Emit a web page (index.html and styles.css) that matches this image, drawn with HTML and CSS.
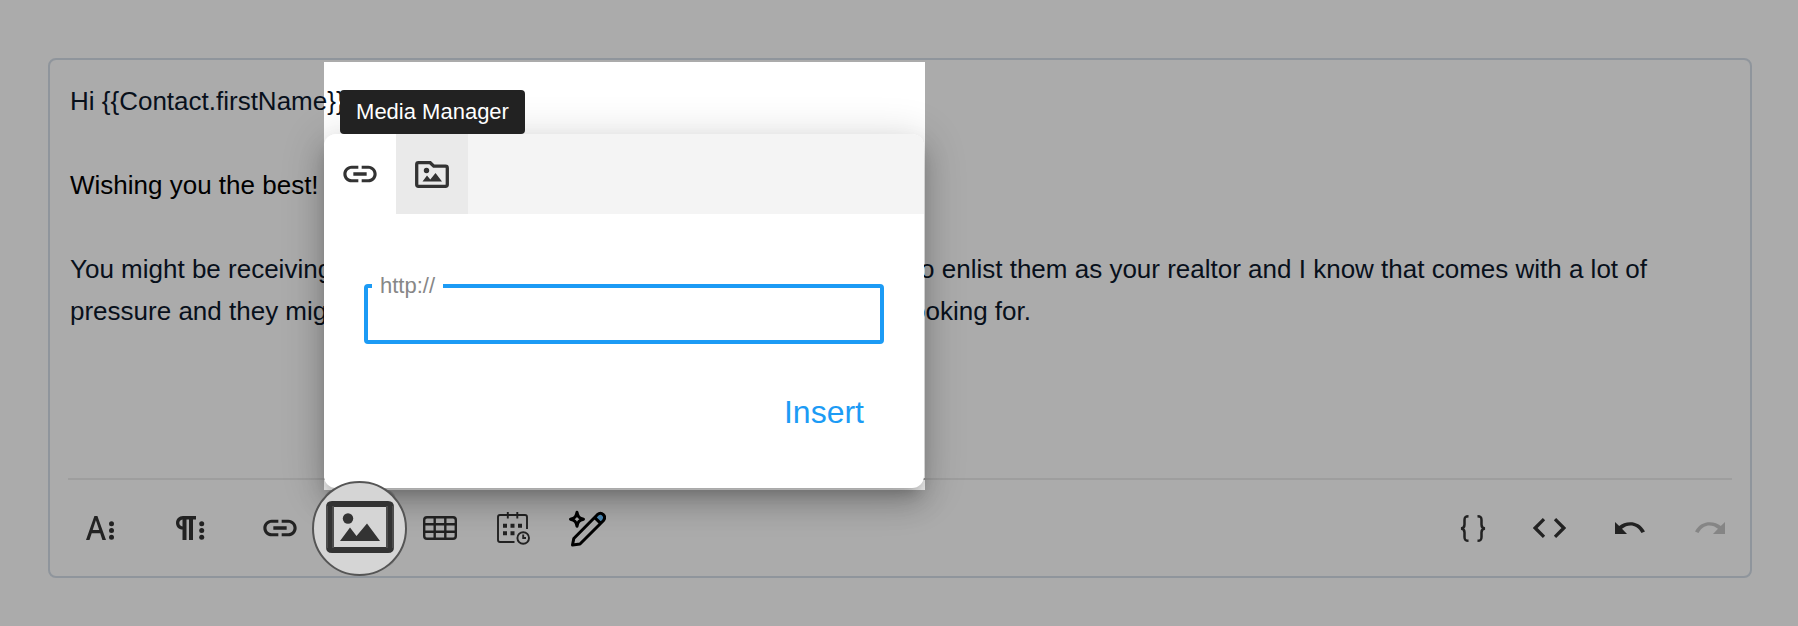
FILE: index.html
```html
<!DOCTYPE html>
<html lang="en">
<head>
<meta charset="utf-8">
<title>Message editor</title>
<link rel="stylesheet" href="styles.css">
</head>
<body>
<div class="spotlight"></div>
<main class="editor">
  <div class="content">
    <p class="line">Hi {{Contact.firstName}},</p>
    <p class="line plain">Wishing you the best!</p>
    <p class="line split wide"><span>You might be receiving</span><span>to enlist them as your realtor and I know that comes with a lot of</span></p>
    <p class="line split short"><span>pressure and they might</span><span>looking for.</span></p>
  </div>
  <div class="toolbar">
    <svg class="i-font" width="28" height="24" viewBox="0 0 28 24"><path d="M0 24 8.400 0h3L20 24h-3.600l-2.200-6.700H5.700L3.500 24zM6.700 14h6.500L9.900 4.200z"/><circle cx="25.500" cy="7.700" r="2.500"/><circle cx="25.500" cy="14.500" r="2.500"/><circle cx="25.500" cy="21.300" r="2.500"/></svg>
    <svg class="i-para" width="29" height="24" viewBox="0 0 29 24"><path d="M7 0h13v3.400h-3V24h-4V3.400h-2.500V24h-4V13.500C2.800 13.500 0 10.800 0 7s3-7 7-7zM6.500 3.400C4.500 3.700 3.300 5 3.300 6.900s1.200 3.200 3.200 3.500z"/><circle cx="25.700" cy="7.700" r="2.500"/><circle cx="25.700" cy="14.500" r="2.500"/><circle cx="25.700" cy="21.300" r="2.500"/></svg>
    <svg class="i-link" width="40" height="40" viewBox="0 0 24 24"><path d="M3.900 12c0-1.710 1.390-3.100 3.100-3.100h4V7H7c-2.760 0-5 2.240-5 5s2.240 5 5 5h4v-1.900H7c-1.710 0-3.100-1.390-3.100-3.100zM8 13h8v-2H8v2zm9-6h-4v1.900h4c1.710 0 3.100 1.390 3.100 3.100s-1.390 3.100-3.100 3.100h-4V17h4c2.760 0 5-2.240 5-5s-2.240-5-5-5z"/></svg>
    <div class="loupe">
      <svg width="68" height="54" viewBox="0 0 68 54"><path fill-rule="evenodd" d="M6 1h56q6 0 6 6v40q0 6-6 6H6q-6 0-6-6V7q0-6 6-6zM8 7v40h52V7z"/><path class="soft" d="M0 6h2v42H0zM6 6h2v42H6zM60 6h2v42h-2zM66 6h2v42h-2z"/><circle cx="22" cy="18.500" r="5.200"/><path d="M14 41 24 27.500l6.500 8.500L41 23.500 54 41z"/></svg>
    </div>
    <svg class="i-table" width="34" height="24" viewBox="0 0 34 24"><path class="stroke" d="M4 1.200h26q2.800 0 2.800 2.800v16q0 2.800-2.800 2.800H4q-2.800 0-2.800-2.800V4q0-2.800 2.800-2.800zM1 8.200h32M1 15.800h32M11.700 1v22M22.300 1v22"/></svg>
    <svg class="i-cal" width="33" height="33" viewBox="0 0 33 33"><path class="thin" d="M17.500 30H3q-2 0-2-2V5q0-2 2-2h25q2 0 2 2v12M10.800 0v6.500M20.300 0v6.500"/><path d="M6 11.700h4v4H6zM13.500 11.700h4v4h-4zM21 11.700h4v4h-4zM6 19.200h4v4H6zM13.500 19.200h4v4h-4z"/><circle class="thin" cx="26.200" cy="26" r="5.800"/><path class="thin" d="M26.200 22.500V26H29"/></svg>
    <svg class="i-pen" width="38" height="37" viewBox="0 0 38 37"><path class="line-art" d="M9 2.200c.8 4.500 2 5.800 6.500 7-4.500 1-5.700 2.500-6.500 7-.8-4.500-2-6-6.500-7 4.500-1.200 5.700-2.500 6.500-7z"/><path class="tip" d="m27 8.200 2.300-2.400c4-4.200 9.700 1.200 6 5.500L32.700 14z"/><path class="line-art" d="m4.500 35 1.300-6.500L29.300 4.700c4.300-3.800 9.700 1.600 6 6L12 34zM26.800 7.600l6.100 6"/></svg>
    <svg class="i-brace" width="26" height="27" viewBox="0 0 26 27"><path class="brace" d="M8.500 1.300C5 1.300 4.500 2.500 4.500 5v4.500c0 2.500-.7 3.800-3.500 4 2.800.2 3.500 1.500 3.500 4V22c0 2.500.5 3.700 4 3.700M17.500 1.300c3.500 0 4 1.200 4 3.700v4.500c0 2.500.7 3.800 3.500 4-2.800.2-3.500 1.500-3.500 4V22c0 2.500-.5 3.700-4 3.700"/></svg>
    <svg class="i-code" width="33" height="20" viewBox="0 0 33 20"><path class="code" d="M11 1.200 2.200 10l8.800 8.800M22 1.200l8.800 8.800-8.800 8.800"/></svg>
    <svg class="i-undo" width="30" height="12" viewBox="0 0 30 12"><path d="M0 0 4.200 4C10-.8 23.500-2.800 30 9.500L26.500 11C21.500 1.800 13 1.900 7 6.800L12 12H0z"/></svg>
    <svg class="i-redo" width="30" height="12" viewBox="0 0 30 12"><path d="M30 0l-4.200 4C20-.8 6.500-2.800 0 9.500L3.500 11C8.500 1.800 17 1.900 23 6.800L18 12h12z"/></svg>
  </div>
</main>
<section class="popup">
  <div class="tabs">
    <div class="tab active"><svg width="40" height="40" viewBox="0 0 24 24"><path d="M3.900 12c0-1.710 1.390-3.100 3.100-3.100h4V7H7c-2.760 0-5 2.240-5 5s2.240 5 5 5h4v-1.900H7c-1.710 0-3.100-1.390-3.100-3.100zM8 13h8v-2H8v2zm9-6h-4v1.900h4c1.710 0 3.100 1.390 3.100 3.100s-1.390 3.100-3.100 3.100h-4V17h4c2.760 0 5-2.240 5-5s-2.240-5-5-5z"/></svg></div>
    <div class="tab hover"><svg width="34" height="27" viewBox="0 0 34 27"><path class="folder" d="M3.500 1.700h11.700l3.600 3.500h11.700q1.800 0 1.800 1.800v16.500q0 1.800-1.800 1.800h-27q-1.800 0-1.800-1.800v-20q0-1.800 1.800-1.800z"/><circle cx="11.500" cy="9.500" r="2.700"/><path d="m7.500 20.500 4.500-6 3.300 4L20.500 12l6.500 8.500z"/></svg></div>
  </div>
  <fieldset class="field"><legend>http://</legend></fieldset>
  <div class="insert">Insert</div>
</section>
<div class="tooltip">Media Manager</div>
</body>
</html>
```
FILE: styles.css
```css
* { box-sizing: border-box; }
body {
  margin: 0;
  padding: 58px 46px 48px 48px;
  height: 626px;
  position: relative;
  overflow: hidden;
  background: #ababab;
  font-family: "Liberation Sans", Arial, sans-serif;
}
svg { display: block; flex: none; fill: #222; }

/* lit area around the popup */
.spotlight {
  position: absolute;
  left: 324px;
  top: 62px;
  width: 601px;
  height: 428px;
  background: #fff;
}

.editor {
  position: relative;
  height: 520px;
  display: flex;
  flex-direction: column;
  border: 2px solid #8f959c;
  border-radius: 8px;
  padding: 0 18px;
}
.content { flex: 1; padding: 20px 2px 0; }
.line {
  margin: 0;
  height: 42px;
  font-size: 26px;
  line-height: 42px;
  color: #08101b;
  white-space: nowrap;
}
.line:nth-child(-n+2) { margin-bottom: 42px; }
.plain { color: #000; }
.split { display: flex; justify-content: space-between; }
.wide { width: 1577px; }
.short { width: 961px; }

.toolbar {
  height: 98px;
  border-top: 2px solid #9e9e9e;
  padding-left: 18px;
  display: flex;
  align-items: center;
}
.i-para { margin-left: 62px; }
.i-link { margin-left: 55px; }
.loupe { margin-left: 12px; }
.i-table { margin-left: 16px; }
.i-cal { margin-left: 40px; }
.i-pen { margin-left: 38px; }
.i-brace { margin-left: auto; }
.i-code { margin-left: 47px; }
.i-undo { margin-left: 49px; }
.i-redo { margin: 0 7px 0 50px; fill: #858585; }

.loupe {
  width: 95px;
  height: 95px;
  flex: none;
  position: relative;
  z-index: 5;
  display: flex;
  align-items: center;
  justify-content: center;
}
.loupe::before,
.loupe::after {
  content: "";
  position: absolute;
}
.loupe::before {
  z-index: -2;
  left: 12px;
  top: 8px;
  width: 72px;
  height: 78px;
  border-radius: 12px;
  background: #0000002b;
}
.loupe::after {
  z-index: -1;
  inset: 0;
  border: 2px solid #555;
  border-radius: 50%;
  background: #d5d5d5;
}
.loupe svg { fill: #333; margin-top: -3px; }
.loupe .soft { fill: #4c4c4c; }

.stroke { fill: none; stroke: #222; stroke-width: 2.4; }
.thin { fill: none; stroke: #222; stroke-width: 1.9; }
.line-art { fill: none; stroke: #000; stroke-width: 3; stroke-linejoin: round; }
.tip { fill: #4a88b4; }
.brace { fill: none; stroke: #222; stroke-width: 2.5; }
.code { fill: none; stroke: #222; stroke-width: 3.3; }
.folder { fill: none; stroke: #333; stroke-width: 3.3; }

.popup {
  position: absolute;
  z-index: 2;
  left: 324px;
  top: 134px;
  width: 600px;
  height: 354px;
  border-radius: 12px;
  background: #fff;
  box-shadow: 0 10px 14px -6px #0003, 0 16px 26px 2px #00000026, 0 6px 42px 5px #00000024;
}
.tabs {
  display: flex;
  height: 80px;
  overflow: hidden;
  border-radius: 12px 12px 0 0;
  background: #f4f4f4;
}
.tab {
  width: 72px;
  display: flex;
  align-items: center;
  justify-content: center;
}
.tab svg { fill: #333; }
.active svg { margin-top: -1px; }
.active { background: #fff; }
.hover { background: #eaeaea; }
.field {
  margin: 60px 40px 0;
  padding: 0 4px;
  height: 70px;
  border: 4px solid #1c9bf5;
  border-radius: 4px;
}
.field legend {
  padding: 0 8px;
  height: 24px;
  font-size: 22px;
  line-height: 23px;
  color: #878787;
}
.insert {
  margin: 50px 60px 0;
  text-align: right;
  font-size: 32px;
  line-height: 36px;
  color: #1c9bf5;
}
.tooltip {
  position: absolute;
  z-index: 3;
  left: 340px;
  top: 90px;
  width: 185px;
  height: 44px;
  border-radius: 4px;
  background: #222;
  color: #fff;
  font-size: 22px;
  line-height: 43px;
  text-align: center;
}
```
